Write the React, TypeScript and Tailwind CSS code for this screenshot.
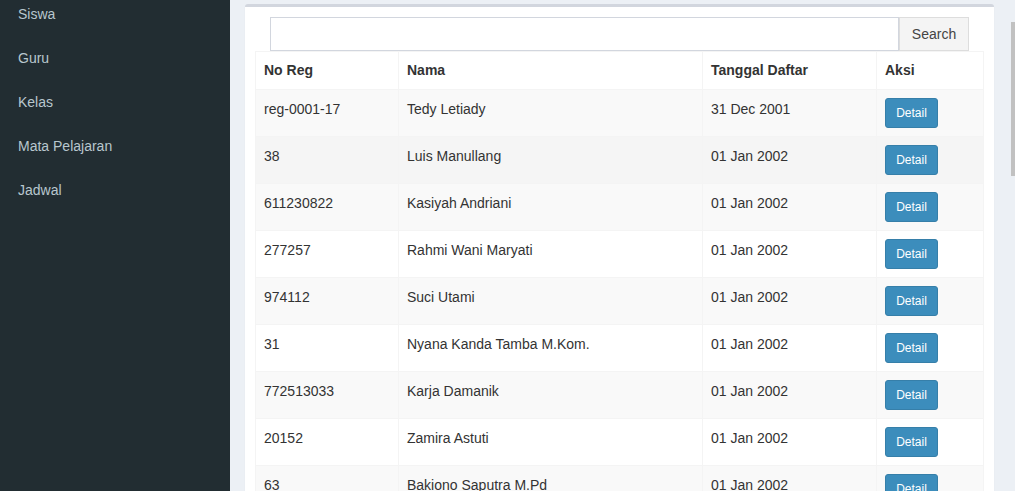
import React from "react";

const rows = [
  ["reg-0001-17", "Tedy Letiady", "31 Dec 2001"],
  ["38", "Luis Manullang", "01 Jan 2002"],
  ["611230822", "Kasiyah Andriani", "01 Jan 2002"],
  ["277257", "Rahmi Wani Maryati", "01 Jan 2002"],
  ["974112", "Suci Utami", "01 Jan 2002"],
  ["31", "Nyana Kanda Tamba M.Kom.", "01 Jan 2002"],
  ["772513033", "Karja Damanik", "01 Jan 2002"],
  ["20152", "Zamira Astuti", "01 Jan 2002"],
  ["63", "Bakiono Saputra M.Pd", "01 Jan 2002"],
];

const menu = ["Siswa", "Guru", "Kelas", "Mata Pelajaran", "Jadwal"];

export default function App() {
  return (
    <div
      className="flex h-[491px] w-[1015px] overflow-hidden text-[14px] text-[#333]"
      style={{ fontFamily: '"Liberation Sans", Arial, sans-serif' }}
    >
      <aside className="w-[230px] shrink-0 bg-[#222d32]">
        <ul className="mt-[-8px]">
          {menu.map((m) => (
            <li key={m} className="flex h-[44px] items-center pl-[18px] text-[#b8c7ce] leading-[20px]">
              {m}
            </li>
          ))}
        </ul>
      </aside>
      <main className="relative flex-1 bg-[#ecf0f5] pl-[15px] pt-[4px]">
        <div className="w-[749px] rounded-[3px] border-t-[3px] border-[#d2d6de] bg-white p-[10px] shadow-[0_1px_1px_rgba(0,0,0,0.1)]">
          <div className="mx-[15px] flex h-[34px]">
            <input className="h-full flex-1 border border-[#d2d6de] outline-none" />
            <button className="h-full w-[70px] border border-[#ddd] bg-[#f4f4f4] text-[14px] text-[#444]">
              Search
            </button>
          </div>
          <table className="w-[728px] table-fixed border-collapse border border-[#f4f4f4]">
            <colgroup>
              <col className="w-[143px]" />
              <col className="w-[304px]" />
              <col className="w-[174px]" />
              <col className="w-[107px]" />
            </colgroup>
            <thead>
              <tr className="bg-white">
                {["No Reg", "Nama", "Tanggal Daftar", "Aksi"].map((h) => (
                  <th
                    key={h}
                    className="h-[38px] border border-[#f4f4f4] px-[8px] py-[8px] text-left align-top font-bold leading-[20px]"
                  >
                    {h}
                  </th>
                ))}
              </tr>
            </thead>
            <tbody>
              {rows.map((r, i) => (
                <tr
                  key={i}
                  className={i === 1 ? "bg-[#f5f5f5]" : i % 2 === 0 ? "bg-[#f9f9f9]" : "bg-white"}
                >
                  {r.map((c, j) => (
                    <td
                      key={j}
                      className="border border-[#f4f4f4] px-[8px] pt-[9px] pb-[7px] align-top leading-[20px]"
                    >
                      {c}
                    </td>
                  ))}
                  <td className="border border-[#f4f4f4] px-[8px] py-[8px] align-top">
                    <button className="h-[30px] w-[53px] rounded-[3px] border border-[#367fa9] bg-[#3c8dbc] text-[12px] leading-[18px] text-white">
                      Detail
                    </button>
                  </td>
                </tr>
              ))}
            </tbody>
          </table>
        </div>
        <div className="absolute right-0 top-[22px] h-[154px] w-[4px] bg-[#c1c1c1]" />
      </main>
    </div>
  );
}
